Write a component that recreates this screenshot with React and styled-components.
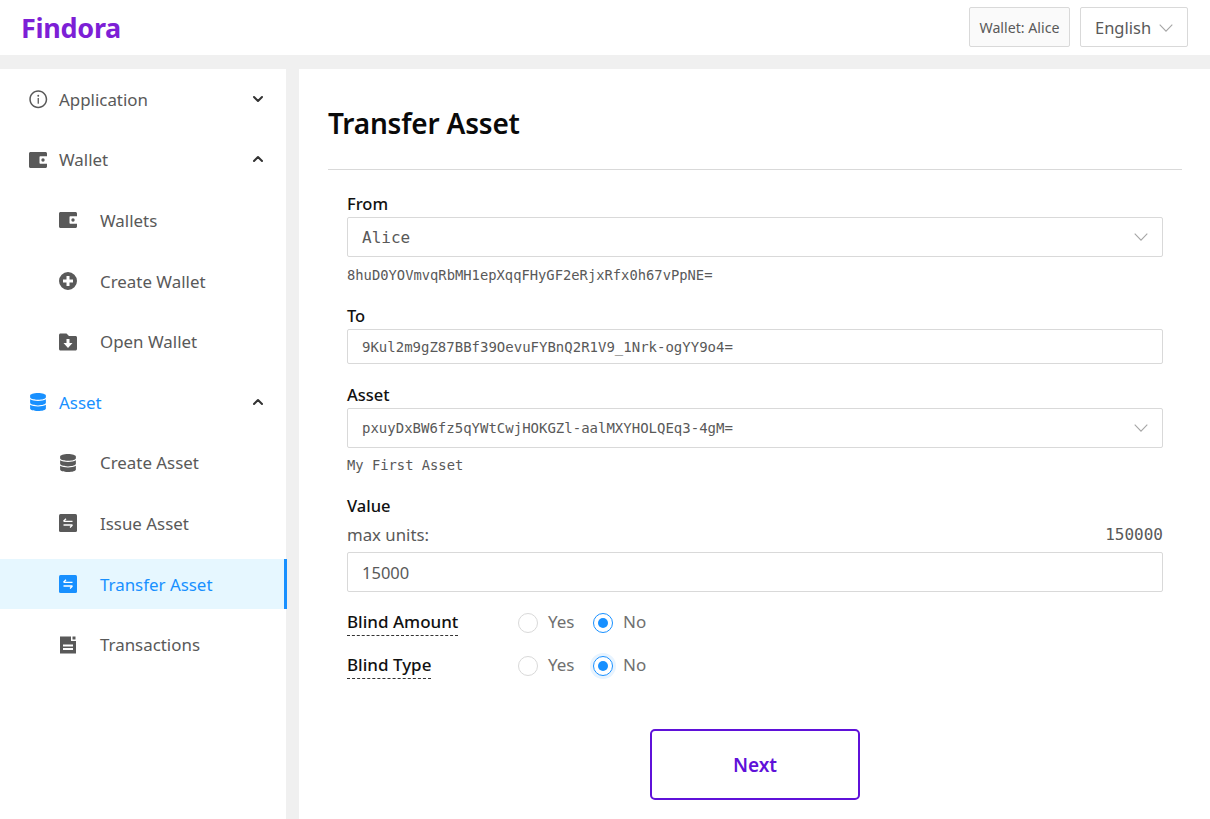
import React from 'react'
import styled, { createGlobalStyle } from 'styled-components'
import { AiOutlineInfoCircle } from 'react-icons/ai'
import { FaDatabase } from 'react-icons/fa'
import { LuChevronDown, LuChevronUp } from 'react-icons/lu'

const SANS = '"Noto Sans", "Open Sans", sans-serif'
const MONO = '"DejaVu Sans Mono", "Liberation Mono", monospace'

const GlobalStyle = createGlobalStyle`
  html, body {
    margin: 0;
    height: 100%;
    overflow: hidden;
    background: #f0f0f0;
    font-family: ${SANS};
  }
  * { box-sizing: border-box; }
`

const Page = styled.div`
  width: 1210px;
  height: 819px;
  display: flex;
  flex-direction: column;
  overflow: hidden;
`

const Header = styled.header`
  height: 55px;
  flex: none;
  background: #fff;
  display: flex;
  align-items: center;
  padding: 0 22px 2px;
  margin-bottom: 14px;
`

const Logo = styled.div`
  font-size: 27px;
  font-weight: 700;
  color: #7d1fd6;
  flex: 1;
  line-height: 1;
  letter-spacing: -0.3px;
  margin: 2px 0 0 -1px;
`

const WalletTag = styled.div`
  width: 101px;
  height: 40px;
  background: #fafafa;
  border: 1px solid #d9d9d9;
  border-radius: 2px;
  font-size: 14.2px;
  color: #595959;
  display: flex;
  align-items: center;
  justify-content: center;
  padding-top: 2px;
  margin-right: 10px;
`

const LangSelect = styled.div`
  width: 108px;
  height: 40px;
  background: #fff;
  border: 1px solid #d9d9d9;
  border-radius: 2px;
  font-size: 16.5px;
  color: #595959;
  display: flex;
  align-items: center;
  justify-content: space-between;
  padding: 2px 14px 0;
`

const Body = styled.div`
  flex: 1;
  display: flex;
  gap: 13px;
  min-height: 0;
`

const Sidebar = styled.nav`
  width: 286px;
  flex: none;
  background: #fff;
  padding-top: 5.3px;
`

const MenuItem = styled.div`
  height: 50px;
  margin: 0 -1px 10.6px 0;
  display: flex;
  align-items: center;
  padding-left: ${(p) => (p.$sub ? 59 : 29)}px;
  padding-right: 18px;
  font-size: 16.9px;
  color: ${(p) => (p.$blue ? '#1890ff' : '#595959')};
  background: ${(p) => (p.$active ? '#e6f7ff' : 'transparent')};
  border-right: 3px solid ${(p) => (p.$active ? '#1890ff' : 'transparent')};
`

const MenuIcon = styled.span`
  width: 18px;
  height: 18px;
  flex: none;
  display: flex;
  align-items: center;
  justify-content: center;
  margin-right: ${(p) => (p.$sub ? 23 : 12)}px;

  svg {
    flex: none;
  }
`

const MenuLabel = styled.span`
  flex: 1;
`

const Arrow = styled.span`
  display: flex;
  color: #333;
  font-size: 16px;
  margin-top: -1px;
`

const Main = styled.main`
  flex: 1;
  background: #fff;
  padding: 0 28px 0 29px;
  min-width: 0;
`

const Title = styled.h1`
  margin: 0;
  height: 101px;
  display: flex;
  align-items: center;
  padding-top: 7px;
  font-size: 28px;
  font-weight: 600;
  color: #0a0a0a;
  letter-spacing: -0.2px;
  border-bottom: 1px solid #d9d9d9;
`

const Form = styled.form`
  padding: 22px 19px 0;
`

const Label = styled.div`
  font-size: 16.5px;
  font-weight: 500;
  color: #111;
  line-height: 24px;
  height: 25px;
`

const FieldBox = styled.div`
  height: ${(p) => p.$h}px;
  border: 1px solid #d9d9d9;
  border-radius: 2px;
  background: #fff;
  display: flex;
  align-items: center;
  justify-content: space-between;
  padding: 0 14px;
  font-family: ${(p) => (p.$sans ? SANS : MONO)};
  font-size: ${(p) => p.$size}px;
  color: #595959;
  margin-bottom: ${(p) => p.$after}px;
`

const Hint = styled.div`
  font-family: ${MONO};
  font-size: 13.8px;
  line-height: 20px;
  color: #595959;
  margin: ${(p) => p.$top}px 0 19px;
`

const MaxRow = styled.div`
  display: flex;
  justify-content: space-between;
  align-items: center;
  height: 30px;
  margin-bottom: 3px;
  font-size: 16.8px;
  color: #595959;
`

const MaxValue = styled.span`
  font-family: ${MONO};
  font-size: 16px;
`

const RadioRow = styled.div`
  display: flex;
  align-items: center;
  height: 26px;
  margin-bottom: 17px;
`

const TipLabel = styled.div`
  width: 171px;
  flex: none;
`

const TipText = styled.span`
  display: inline-block;
  font-size: 17px;
  font-weight: 500;
  color: #111;
  line-height: 22px;
  padding-bottom: 2px;
  border-bottom: 1px dashed #333;
`

const RadioOption = styled.div`
  display: flex;
  align-items: center;
  width: ${(p) => p.$w}px;
  font-size: 17px;
  color: #707070;
`

const OptionText = styled.span`
  padding-bottom: 3px;
`

const Radio = styled.span`
  width: 20px;
  height: 20px;
  flex: none;
  border-radius: 50%;
  border: 1px solid ${(p) => (p.$on ? '#1890ff' : '#d9d9d9')};
  margin-right: 10px;
  display: flex;
  align-items: center;
  justify-content: center;
  box-shadow: ${(p) => (p.$focus ? '0 0 0 3px #e8f4ff' : 'none')};
  &::after {
    content: '';
    display: ${(p) => (p.$on ? 'block' : 'none')};
    width: 10px;
    height: 10px;
    border-radius: 50%;
    background: #1890ff;
  }
`

const Actions = styled.div`
  display: flex;
  justify-content: center;
  margin-top: 50px;
`

const NextButton = styled.button`
  width: 210px;
  height: 71px;
  background: #fff;
  border: 2px solid #5f11d9;
  border-radius: 5px;
  color: #5f11d9;
  font-family: ${SANS};
  font-size: 19px;
  font-weight: 600;
`

const WalletIcon = () => (
  <svg width="18" height="18" viewBox="0 0 18 18">
    <path
      fill="currentColor"
      fillRule="evenodd"
      d="M1.5 1H16.5C17.3 1 18 1.7 18 2.5V5.2H11.2C10.8 5.2 10.5 5.5 10.5 5.9V12.1C10.5 12.5 10.8 12.8 11.2 12.8H18V15.5C18 16.3 17.3 17 16.5 17H1.5C.7 17 0 16.3 0 15.5V2.5C0 1.7.7 1 1.5 1Z"
    />
    <circle cx="14" cy="9" r="1.7" fill="currentColor" />
  </svg>
)

const PlusIcon = () => (
  <svg width="18" height="18" viewBox="0 0 18 18">
    <path
      fill="currentColor"
      fillRule="evenodd"
      d="M9 0a9 9 0 1 1 0 18A9 9 0 0 1 9 0ZM7.5 4v3.5H4v3h3.5V14h3v-3.5H14v-3h-3.5V4Z"
    />
  </svg>
)

const FolderDown = () => (
  <svg width="18" height="18" viewBox="0 0 18 18">
    <path
      fill="currentColor"
      fillRule="evenodd"
      d="M0 2C0 1.2.7.5 1.5.5H7.5L10 3h6.5c.8 0 1.5.7 1.5 1.5V16c0 .8-.7 1.5-1.5 1.5h-15C.7 17.5 0 16.8 0 16ZM7.5 6v4H4.5L9 15l4.5-5h-3V6Z"
    />
  </svg>
)

const TransferIcon = () => (
  <svg width="18" height="18" viewBox="0 0 18 18">
    <rect width="18" height="18" rx="1.5" fill="currentColor" />
    <path d="M4.5 7.3H13.5M4.5 7.3L7 4.8M13.5 11H4.5M13.5 11L11 13.5" stroke="#fff" strokeWidth="1.3" fill="none" />
  </svg>
)

const TxFile = () => (
  <svg width="18" height="18" viewBox="0 0 18 18">
    <path
      fill="currentColor"
      fillRule="evenodd"
      d="M1 .5H12V5H17V17.5H1ZM4 8.5V10.5H14V8.5ZM4 12V14H14V12Z"
    />
    <rect x="13.5" y=".5" width="3" height="3" fill="currentColor" />
  </svg>
)

const SelectArrow = () => (
  <svg width="14" height="8" viewBox="0 0 14 8">
    <path d="M.7.7 7 7.2 13.3.7" stroke="#a6a6a6" strokeWidth="1.1" fill="none" />
  </svg>
)

const Chevron = ({ up }) => (
  <Arrow>{up ? <LuChevronUp strokeWidth={3} /> : <LuChevronDown strokeWidth={3} />}</Arrow>
)

const menu = [
  { label: 'Application', icon: <AiOutlineInfoCircle size={20.5} />, arrow: 'down' },
  { label: 'Wallet', icon: <WalletIcon />, arrow: 'up' },
  { label: 'Wallets', icon: <WalletIcon />, sub: true },
  { label: 'Create Wallet', icon: <PlusIcon />, sub: true },
  { label: 'Open Wallet', icon: <FolderDown />, sub: true },
  { label: 'Asset', icon: <FaDatabase size={18} />, arrow: 'up', blue: true },
  { label: 'Create Asset', icon: <FaDatabase size={18} />, sub: true },
  { label: 'Issue Asset', icon: <TransferIcon />, sub: true },
  { label: 'Transfer Asset', icon: <TransferIcon />, sub: true, blue: true, active: true },
  { label: 'Transactions', icon: <TxFile />, sub: true },
]

const Choice = ({ focus }) => (
  <>
    <RadioOption $w={75}>
      <Radio />
      <OptionText>Yes</OptionText>
    </RadioOption>
    <RadioOption $w={70}>
      <Radio $on $focus={focus} />
      <OptionText>No</OptionText>
    </RadioOption>
  </>
)

const App = () => (
  <Page>
    <GlobalStyle />
    <Header>
      <Logo>Findora</Logo>
      <WalletTag>Wallet: Alice</WalletTag>
      <LangSelect>
        English
        <SelectArrow />
      </LangSelect>
    </Header>
    <Body>
      <Sidebar>
        {menu.map((item) => (
          <MenuItem key={item.label} $sub={item.sub} $blue={item.blue} $active={item.active}>
            <MenuIcon $sub={item.sub}>{item.icon}</MenuIcon>
            <MenuLabel>{item.label}</MenuLabel>
            {item.arrow ? <Chevron up={item.arrow === 'up'} /> : null}
          </MenuItem>
        ))}
      </Sidebar>
      <Main>
        <Title>Transfer Asset</Title>
        <Form>
          <Label>From</Label>
          <FieldBox $h={40} $size={16} $after={0}>
            Alice
            <SelectArrow />
          </FieldBox>
          <Hint $top={8}>8huD0YOVmvqRbMH1epXqqFHyGF2eRjxRfx0h67vPpNE=</Hint>
          <Label>To</Label>
          <FieldBox $h={35} $size={14} $after={19}>
            9Kul2m9gZ87BBf39OevuFYBnQ2R1V9_1Nrk-ogYY9o4=
          </FieldBox>
          <Label>Asset</Label>
          <FieldBox $h={40} $size={14} $after={0}>
            pxuyDxBW6fz5qYWtCwjHOKGZl-aalMXYHOLQEq3-4gM=
            <SelectArrow />
          </FieldBox>
          <Hint $top={7}>My First Asset</Hint>
          <Label>Value</Label>
          <MaxRow>
            <span>max units:</span>
            <MaxValue>150000</MaxValue>
          </MaxRow>
          <FieldBox $h={40} $size={16.5} $after={18} $sans>
            15000
          </FieldBox>
          <RadioRow>
            <TipLabel>
              <TipText>Blind Amount</TipText>
            </TipLabel>
            <Choice />
          </RadioRow>
          <RadioRow>
            <TipLabel>
              <TipText>Blind Type</TipText>
            </TipLabel>
            <Choice focus />
          </RadioRow>
          <Actions>
            <NextButton type="button">Next</NextButton>
          </Actions>
        </Form>
      </Main>
    </Body>
  </Page>
)

export default App
